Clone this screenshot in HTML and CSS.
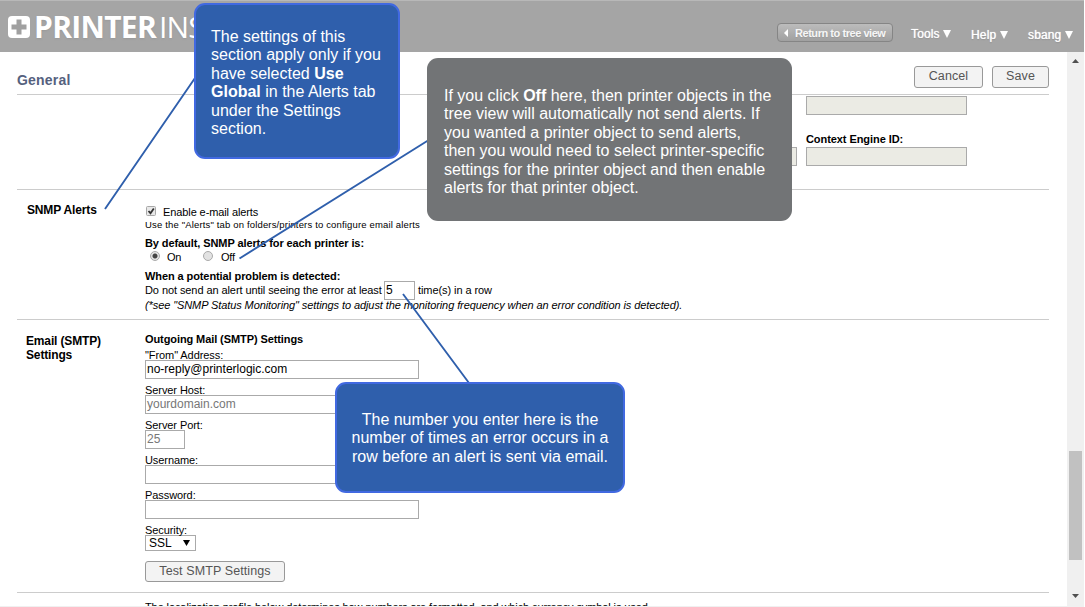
FILE: index.html
```html
<!DOCTYPE html>
<html lang="en">
<head>
<meta charset="utf-8">
<title>Printer Installer - General</title>
<link rel="stylesheet" href="styles.css">
</head>
<body>
<div class="app">
  <header class="header">
    <div class="logo">
      <svg width="24" height="24" viewBox="0 0 24 24"><rect x="1" y="1" width="22" height="22" rx="4" fill="#fff"/><path d="M9.5 4.5h5v5h5v5h-5v5h-5v-5h-5v-5h5z" fill="#a0a0a0"/></svg>
      <span class="logo-bold">PRINTER</span><span class="logo-thin">INS</span>
    </div>
    <div class="return"><svg width="4" height="8" viewBox="0 0 4 8"><path d="M4 0v8L0 4z" fill="#fff"/></svg><span>Return to tree view</span></div>
    <nav class="nav"><span class="tools">Tools <i class="caret"></i></span><span class="help">Help <i class="caret"></i></span><span class="user">sbang <i class="caret"></i></span></nav>
  </header>
  <div class="body">
    <main class="main">
      <div class="titlebar"><h1>General</h1><button class="btn cancel">Cancel</button><button class="btn save">Save</button></div>
      <section class="engine">
        <div class="left-field"><div class="field"></div></div>
        <div class="right-field"><div class="field"></div><div class="label">Context Engine ID:</div><div class="field"></div></div>
      </section>
      <section class="snmp">
        <h2><span>SNMP Alerts</span></h2>
        <div class="content">
          <div class="row enable"><svg class="check" width="11" height="11" viewBox="0 0 11 11"><rect x=".5" y=".5" width="9" height="9" rx="1" fill="#e8e8e8" stroke="#a8a8a8"/><path d="M2.500 5l2 2.200 3.300-4.700" fill="none" stroke="#333" stroke-width="1.800"/></svg><span>Enable e-mail alerts</span></div>
          <div class="row hint"><span>Use the "Alerts" tab on folders/printers to configure email alerts</span></div>
          <div class="row strong default"><span>By default, SNMP alerts for each printer is:</span></div>
          <div class="row radios"><i class="radio on"></i><span class="on-label">On</span><i class="radio"></i><span>Off</span></div>
          <div class="row strong when"><span>When a potential problem is detected:</span></div>
          <div class="row least"><span class="least-text">Do not send an alert until seeing the error at least</span><span class="count">5</span><span>time(s) in a row</span></div>
          <div class="row note"><span>(*see "SNMP Status Monitoring" settings to adjust the monitoring frequency when an error condition is detected).</span></div>
        </div>
      </section>
      <section class="smtp">
        <h2><span>Email (SMTP)</span><br><span>Settings</span></h2>
        <div class="content">
          <div class="row strong outgoing"><span>Outgoing Mail (SMTP) Settings</span></div>
          <div class="group"><label>"From" Address:</label><div class="input value">no-reply@printerlogic.com</div></div>
          <div class="group"><label>Server Host:</label><div class="input">yourdomain.com</div></div>
          <div class="group"><label>Server Port:</label><div class="input port">25</div></div>
          <div class="group"><label>Username:</label><div class="input"></div></div>
          <div class="group"><label>Password:</label><div class="input"></div></div>
          <div class="group"><label>Security:</label><div class="select"><span>SSL</span><svg width="7" height="6" viewBox="0 0 7 6"><path d="M0 0h7L3.5 6z"/></svg></div></div>
          <button class="btn test">Test SMTP Settings</button>
        </div>
      </section>
      <section class="local"><span>The localization profile below determines how numbers are formatted, and which currency symbol is used.</span></section>
    </main>
    <aside class="scroll"><svg width="7" height="4" viewBox="0 0 7 4"><path d="M0 4h7L3.5 0z" fill="#505050"/></svg><div class="thumb"></div><svg width="7" height="4" viewBox="0 0 7 4"><path d="M0 0h7L3.5 4z" fill="#505050"/></svg></aside>
  </div>
  <svg class="lines" width="1085" height="607"><path d="M105 209L195 78M239.500 258.500L428 140.500M403 294L469 383" stroke="#2f5fac" stroke-width="1.900" fill="none"/></svg>
  <div class="callout blue one">The settings of this<br>section apply only if you<br>have selected <b>Use</b><br><b>Global</b> in the Alerts tab<br>under the Settings<br>section.</div>
  <div class="callout gray">If you click <b>Off</b> here, then printer objects in the<br>tree view will automatically not send alerts. If<br>you wanted a printer object to send alerts,<br>then you would need to select printer-specific<br>settings for the printer object and then enable<br>alerts for that printer object.</div>
  <div class="callout blue two">The number you enter here is the<br>number of times an error occurs in a<br>row before an alert is sent via email.</div>
</div>
</body>
</html>
```
FILE: styles.css
```css
* { box-sizing: border-box; }
body { margin: 0; background: #fff; color: #000; font: 11px "Liberation Sans", Arial, sans-serif; }
.app { position: relative; width: 1085px; height: 607px; overflow: hidden; display: flex; flex-direction: column; white-space: nowrap; }
.header { width: 1084px; height: 52px; flex: none; background: #a5a5a5; border-top: 1px solid #b8b8b8; display: flex; align-items: flex-start; color: #fff; }
.logo { display: flex; width: 777px; padding: 14px 0 0 7px; font: 700 30px/24px "Open Sans", sans-serif; text-shadow: 0 1px 2px #999; }
.logo-bold { margin-left: 3px; width: 125px; letter-spacing: -.7px; }
.logo-thin { font-weight: 400; letter-spacing: -.8px; }
.return { width: 116px; height: 19px; margin-top: 22px; border: 1px solid #858585; border-radius: 4px; background: linear-gradient(#bcbcbc, #a0a0a0); display: flex; align-items: center; padding-left: 6px; gap: 7px; font-weight: 700; font-size: 11px; letter-spacing: -.45px; color: #f6f6f6; text-shadow: 0 1px 1px #999; }
.nav { display: flex; font-size: 12px; line-height: 14px; padding-top: 26px; text-shadow: 0 0 1px #fff, 0 1px 1px #888; letter-spacing: .15px; }
.tools { margin-left: 18px; width: 60px; }
.help { width: 57px; padding-top: 1px; }
.user { padding-top: 1px; }
.caret { display: inline-block; border: 3.500px solid transparent; border-width: 8px 4px 0; border-top-color: #fff; }
.body { height: 555px; display: flex; }
.main { width: 1067px; padding-left: 17px; display: flex; flex-direction: column; overflow: hidden; border-bottom: 1px solid #f0f0f0; }
.main > * { width: 1032px; flex: none; border-bottom: 1px solid #ccc; }
.titlebar { height: 43px; display: flex; padding-top: 14px; }
h1 { margin: 5px 0 0; width: 897px; color: #55617e; font-size: 14px; line-height: 18px; letter-spacing: .2px; }
.btn { display: block; border: 1px solid #999; border-radius: 3px; background: #f3f3f3; color: #555; padding: 0 0 2px; font: 12.500px/16px "Liberation Sans", Arial, sans-serif; letter-spacing: .1px; height: 22px; }
.cancel { width: 69px; margin-right: 9px; }
.save { width: 57px; }
.engine { height: 95px; display: flex; }
.field { width: 161px; height: 19px; border: 1px solid #aaa; background: #ebebe4; }
.left-field { padding-top: 52px; margin-left: 619px; }
.right-field { margin-left: 9px; padding-top: 1px; }
.label { height: 32px; padding-top: 17px; line-height: 14px; font-weight: 700; letter-spacing: -.07px; }
.snmp, .smtp { display: flex; }
.snmp { height: 130px; }
h2 { margin: 0; width: 128px; padding: 13px 0 0 10px; font-size: 12px; line-height: 14px; letter-spacing: -.15px; }
.smtp h2 { padding: 14px 0 0 9px; }
.row { height: 14px; line-height: 14px; display: flex; }
.enable { margin-top: 15px; letter-spacing: -.1px; }
.check { margin: 1px 6px 0 1px; }
.hint { font-size: 9.500px; height: 12px; line-height: 12px; letter-spacing: .16px; }
.default { margin-top: 5px; }
.strong { font-weight: 700; letter-spacing: -.09px; }
.radio { width: 10px; height: 10px; margin: 1px 8px 0 0; border: 1px solid #aaa; border-radius: 50%; background: #e2e2e2; }
.radios { padding-left: 5px; letter-spacing: -.2px; }
.radio.on { background: radial-gradient(circle, #444 0 2px, #e5e5e5 3px); margin-right: 7px; }
.on-label { width: 36px; }
.when { margin-top: 5px; }
.least { align-items: flex-start; letter-spacing: -.08px; }
.least-text { width: 239px; }
.count { width: 31px; height: 19px; line-height: 17px; margin: -2px 3px 0 0; padding-left: 1px; border: 1px solid #aaa; font-size: 12px; }
.note { font-style: italic; margin-top: 1px; letter-spacing: -.09px; }
.smtp { height: 273px; }
.outgoing { margin-top: 12px; height: 16px; }
.group { height: 35px; }
label { display: block; height: 12px; line-height: 14px; letter-spacing: -.08px; }
.input { width: 274px; height: 19px; line-height: 16px; border: 1px solid #aaa; padding-left: 1px; font-size: 12px; color: #777; }
.value { color: #000; }
.port { width: 40px; }
.select { width: 51px; height: 16px; border: 1px solid #aaa; display: flex; align-items: center; padding-left: 3px; gap: 11px; font-size: 12px; line-height: 14px; }
.test { width: 140px; height: 21px; margin-top: 3px; }
.main > .local { border: 0; padding: 7px 0 0 128px; line-height: 14px; letter-spacing: -.1px; }
.scroll { width: 17px; background: #f0f0f0; display: flex; flex-direction: column; align-items: center; padding-top: 7px; }
.thumb { width: 13px; height: 109px; margin: 388px 0 34px; background: #c1c1c1; }
.scroll svg { flex: none; }
.lines { position: absolute; left: 0; top: 0; }
.callout { position: absolute; border-radius: 11px; color: #fff; font-size: 16px; line-height: 18.400px; }
.blue { background: #2f5fac; border: 2px solid #4169e1; }
.one { left: 194px; top: 3px; width: 206px; height: 156px; padding: 23px 0 0 15px; }
.gray { left: 427px; top: 58px; width: 365px; height: 163px; background: #727476; padding: 29px 0 0 17px; }
.two { left: 335px; top: 382px; width: 290px; height: 111px; text-align: center; padding-top: 27px; }
```
